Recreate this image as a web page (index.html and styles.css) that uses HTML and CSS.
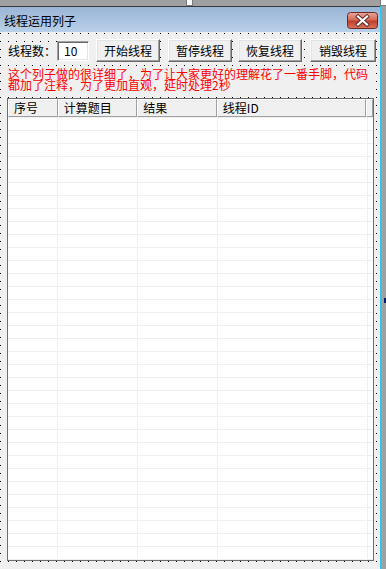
FILE: index.html
```html
<!DOCTYPE html>
<html lang="zh">
<head>
<meta charset="utf-8">
<title>线程运用列子</title>
<link rel="stylesheet" href="styles.css">
</head>
<body>
<div class="screen">
  <div class="topband">
    <span class="handle handle-mid"></span>
    <span class="handle handle-right"></span>
  </div>
  <div class="frame">
    <div class="window">
      <div class="titlebar">
        <span class="title">线程运用列子</span>
        <span class="close">
          <svg width="31" height="17" viewBox="0 0 31 17">
            <defs>
              <linearGradient id="cg" x1="0" y1="0" x2="0" y2="1">
                <stop offset="0" stop-color="#e9a89b"/>
                <stop offset="0.45" stop-color="#d56a56"/>
                <stop offset="0.55" stop-color="#c0402b"/>
                <stop offset="1" stop-color="#d8775e"/>
              </linearGradient>
            </defs>
            <rect x="0.5" y="0.5" width="30" height="16" rx="3" fill="url(#cg)" stroke="#6e2a22"/>
            <path d="M11 4.5 L20 12.5 M20 4.5 L11 12.5" stroke="#5a2a26" stroke-width="4" stroke-linecap="square"/>
            <path d="M11 4.5 L20 12.5 M20 4.5 L11 12.5" stroke="#ffffff" stroke-width="2.2" stroke-linecap="square"/>
          </svg>
        </span>
      </div>
      <div class="client">
        <div class="toolbar">
          <span class="label">线程数：</span>
          <span class="textbox">10</span>
          <button class="btn btn-start">开始线程</button>
          <button class="btn btn-pause">暂停线程</button>
          <button class="btn btn-resume">恢复线程</button>
          <button class="btn btn-destroy">销毁线程</button>
        </div>
        <div class="note">这个列子做的很详细了，为了让大家更好的理解花了一番手脚，代码都加了注释，为了更加直观，延时处理2秒</div>
        <div class="grid">
          <div class="grid-head">
            <div class="th c1">序号</div>
            <div class="th c2">计算题目</div>
            <div class="th c3">结果</div>
            <div class="th c4">线程ID</div>
            <div class="th c5"></div>
          </div>
          <div class="grid-body">
            <div class="col c1"></div>
            <div class="col c2"></div>
            <div class="col c3"></div>
            <div class="col c4"></div>
            <div class="col c5"></div>
          </div>
        </div>
      </div>
    </div>
    <div class="edge-cyan"></div>
    <div class="edge-gray"><span class="side-handle"></span></div>
  </div>
</div>
</body>
</html>
```

FILE: styles.css
```css
html, body {
  margin: 0;
  padding: 0;
  background: #a0a0a0;
}

body {
  font-family: "Noto Sans CJK SC", "Liberation Sans", sans-serif;
  font-size: 12px;
  color: #000;
}

.screen {
  width: 386px;
  height: 569px;
  display: flex;
  flex-direction: column;
  overflow: hidden;
}

.topband {
  height: 6px;
  background: #a0a0a0;
  position: relative;
  flex: none;
}

.handle {
  position: absolute;
  top: 0;
  width: 5px;
  height: 5px;
  background: #ffffff;
  border: 1px solid #7a7a7a;
  border-top: none;
}

.handle-mid { left: 186px; }
.handle-right { left: 380px; }

.frame {
  flex: 1;
  display: flex;
  min-height: 0;
}

.window {
  width: 380px;
  display: flex;
  flex-direction: column;
  border-top: 1px solid #3a3a3a;
}

.titlebar {
  height: 25px;
  flex: none;
  display: flex;
  align-items: center;
  justify-content: space-between;
  background: linear-gradient(#9ab5d6, #b9d0e9);
  padding-left: 4px;
}

.title {
  font-size: 12px;
  line-height: 12px;
  color: #000;
  margin-top: 2px;
}

.close {
  display: block;
  width: 31px;
  height: 17px;
  margin-right: 2px;
  margin-top: 2px;
}

.close svg { display: block; }

.client {
  flex: 1;
  min-height: 0;
  background-color: #f0f0f0;
  background-image: conic-gradient(at 1px 1px, transparent 270deg, #000 270deg);
  background-size: 8px 8px;
  background-position: 0 1px;
  padding-top: 7px;
  display: flex;
  flex-direction: column;
}

.toolbar {
  display: flex;
  align-items: center;
  height: 23px;
  padding-left: 8px;
}

.label {
  width: 49px;
  line-height: 14px;
  background: #f0f0f0;
}

.textbox {
  box-sizing: border-box;
  width: 32px;
  height: 20px;
  background: #fff;
  border-top: 1px solid #a0a0a0;
  border-left: 1px solid #a0a0a0;
  border-right: 1px solid #ffffff;
  border-bottom: 1px solid #ffffff;
  box-shadow: inset 1px 1px 0 #696969, inset -1px -1px 0 #e3e3e3;
  padding-left: 6px;
  line-height: 18px;
  font-size: 12px;
}

.btn {
  box-sizing: border-box;
  width: 64px;
  height: 23px;
  padding: 0;
  margin: 0;
  background: #f0f0f0;
  border-top: 1px solid #ffffff;
  border-left: 1px solid #ffffff;
  border-right: 1px solid #696969;
  border-bottom: 1px solid #696969;
  box-shadow: inset -1px -1px 0 #a0a0a0, inset 1px 1px 0 #e3e3e3;
  font-family: "Noto Sans CJK SC", "Liberation Sans", sans-serif;
  font-size: 12px;
  color: #000;
  line-height: 20px;
}

.btn-start { margin-left: 7px; }
.btn-pause { margin-left: 8px; }
.btn-resume { margin-left: 6px; }
.btn-destroy { margin-left: 8px; width: 66px; }

.note {
  margin-top: 6px;
  margin-left: 8px;
  width: 362px;
  color: #ff0000;
  font-size: 12px;
  line-height: 11px;
  background: #f0f0f0;
}

.grid {
  box-sizing: border-box;
  margin-top: 8px;
  margin-left: 7px;
  width: 367px;
  height: 463px;
  border: 1px solid #6d6d6d;
  background: #fff;
  display: flex;
  flex-direction: column;
}

.grid-head {
  display: flex;
  height: 18px;
  flex: none;
}

.th {
  box-sizing: border-box;
  height: 18px;
  background: #f0f0f0;
  border-top: 1px solid #ffffff;
  border-left: 1px solid #ffffff;
  border-right: 1px solid #a0a0a0;
  border-bottom: 1px solid #a0a0a0;
  padding-left: 5px;
  line-height: 15px;
  white-space: nowrap;
}

.c1 { width: 50px; }
.c2 { width: 80px; }
.c3 { width: 80px; }
.c4 { width: 150px; }
.c5 { flex: 1; }

.grid-body {
  flex: 1;
  display: flex;
  background-image: linear-gradient(to bottom, transparent 12px, #f0f0f0 12px);
  background-size: 100% 13px;
  background-position: 0 1px;
}

.col {
  box-sizing: border-box;
  height: 100%;
  border-right: 1px solid #f0f0f0;
}

.col.c5 { border-right: none; }

.edge-cyan {
  width: 2px;
  background: #2fc6f2;
}

.edge-gray {
  flex: 1;
  background: #a0a0a0;
  position: relative;
}

.side-handle {
  position: absolute;
  left: 2px;
  top: 292px;
  width: 3px;
  height: 5px;
  background: #0a1a6a;
}
```
